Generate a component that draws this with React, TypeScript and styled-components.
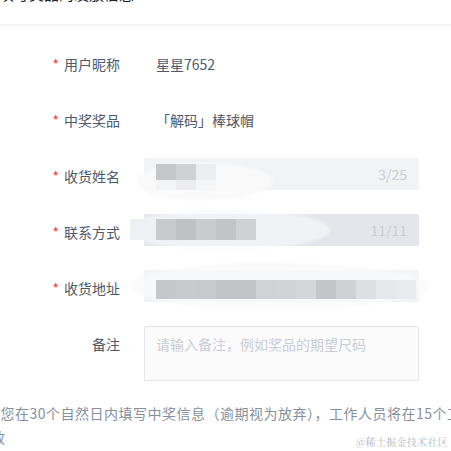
import styled, { createGlobalStyle } from 'styled-components';

const GlobalStyle = createGlobalStyle`
  html, body {
    margin: 0;
    padding: 0;
    background: #ffffff;
    overflow: hidden;
  }
  body {
    font-family: "Noto Sans CJK SC", "Noto Sans", sans-serif;
  }
`;

const Page = styled.div`
  position: relative;
  width: 451px;
  height: 451px;
  overflow: hidden;
`;

const Header = styled.div`
  margin-top: -18px;
  padding-bottom: 18px;
  border-bottom: 2px solid #f2f3f5;
`;

const HeaderTitle = styled.div`
  margin-left: -16px;
  font-size: 15px;
  line-height: 24px;
  color: #1d2129;
  white-space: nowrap;
`;

const Form = styled.div`
  display: flex;
  flex-direction: column;
  gap: 24px;
  padding-top: 20px;
`;

const Row = styled.div`
  display: flex;
  align-items: flex-start;
`;

const Label = styled.div`
  width: 120px;
  flex-shrink: 0;
  margin-right: 24px;
  box-sizing: border-box;
  height: 32px;
  padding-top: 4px;
  text-align: right;
  font-size: 14px;
  line-height: 28px;
  color: #4e5969;
  white-space: nowrap;
`;

const Star = styled.span`
  color: #f53f3f;
  margin-right: 5px;
`;

const Value = styled.div`
  box-sizing: border-box;
  height: 32px;
  padding: 4px 12px 0;
  font-size: 14px;
  line-height: 28px;
  color: #4e5969;
`;

const Field = styled.div<{ $tone?: string }>`
  position: relative;
  width: 275px;
  height: 32px;
  box-sizing: border-box;
  padding: 0 12px;
  display: flex;
  align-items: center;
  justify-content: flex-end;
  background: ${(p) => p.$tone || '#f2f3f5'};
  border-radius: 2px;
`;

const Counter = styled.span`
  position: relative;
  z-index: 2;
  font-size: 14px;
  color: #c9cdd4;
`;

const Smear = styled.div<{ $l: number; $t: number; $w: number; $h: number; $a?: number }>`
  position: absolute;
  left: ${(p) => p.$l}px;
  top: ${(p) => p.$t}px;
  width: ${(p) => p.$w}px;
  height: ${(p) => p.$h}px;
  background: rgba(249, 250, 251, ${(p) => p.$a ?? 0.9});
  border-radius: 40% 50% 50% 40% / 50%;
  filter: blur(1.5px);
  z-index: 0;
`;

const Mosaic = styled.div<{ $l: number; $t: number }>`
  position: absolute;
  left: ${(p) => p.$l}px;
  top: ${(p) => p.$t}px;
  display: flex;
  flex-direction: column;
  z-index: 1;
`;

const MosaicRow = styled.div<{ $h: number }>`
  display: flex;
  height: ${(p) => p.$h}px;
`;

const Cell = styled.div<{ $c: string; $w: number }>`
  width: ${(p) => p.$w}px;
  background: ${(p) => p.$c};
`;

const Remark = styled.textarea`
  width: 275px;
  height: 55px;
  box-sizing: border-box;
  padding: 6px 11px;
  border: 1px solid #e5e6eb;
  border-radius: 2px;
  background: #fbfbfc;
  font-family: "Noto Sans CJK SC", "Noto Sans", sans-serif;
  font-size: 14px;
  line-height: 22px;
  color: #4e5969;
  resize: none;
  outline: none;
  &::placeholder {
    color: #c9cdd4;
  }
`;

const Notice = styled.div`
  margin-top: 20px;
  margin-left: -9px;
  font-size: 14px;
  line-height: 24px;
  letter-spacing: 0.5px;
  color: #86909c;
  white-space: nowrap;
`;

const NoticeFirst = styled.div`
  margin-left: -5px;
`;

const Watermark = styled.div`
  position: absolute;
  right: 3px;
  bottom: 3px;
  font-family: "Noto Serif CJK SC", "Noto Sans CJK SC", serif;
  font-size: 10px;
  line-height: 12px;
  color: #b4b8bf;
  letter-spacing: 0.3px;
`;

type MosaicSpec = {
  l: number;
  t: number;
  rows: { h: number; cells: { c: string; w: number }[] }[];
};

const mk = (colors: string[], w = 20) => colors.map((c) => ({ c, w }));

const nameMosaic: MosaicSpec = {
  l: 12,
  t: 6,
  rows: [
    { h: 16, cells: mk(['#c6c7cb', '#cfd1d4', '#eceef0']) },
    { h: 10, cells: mk(['#f3f4f6', '#ececee', '#f4f5f7']) },
  ],
};

const phoneMosaic: MosaicSpec = {
  l: -14,
  t: 5,
  rows: [
    {
      h: 21,
      cells: [
        { c: '#eef0f3', w: 26 },
        ...mk(['#c8cacd', '#c0c1c5', '#c9cbce', '#c3c4c8', '#cfd1d4']),
      ],
    },
  ],
};

const addressMosaic: MosaicSpec = {
  l: 12,
  t: 10,
  rows: [
    {
      h: 19,
      cells: mk([
        '#c6c7cb',
        '#c9cacd',
        '#c8c9cc',
        '#c3c4c8',
        '#c3c4c8',
        '#d1d2d5',
        '#d2d3d6',
        '#d5d6d9',
        '#c4c5c9',
        '#d0d1d4',
        '#dedfe2',
        '#e6e7ea',
        '#e9eaed',
      ]),
    },
  ],
};

const Pixelated = ({ spec }: { spec: MosaicSpec }) => (
  <Mosaic $l={spec.l} $t={spec.t}>
    {spec.rows.map((row, i) => (
      <MosaicRow key={i} $h={row.h}>
        {row.cells.map((cell, j) => (
          <Cell key={j} $c={cell.c} $w={cell.w} />
        ))}
      </MosaicRow>
    ))}
  </Mosaic>
);

export default function App() {
  return (
    <Page>
      <GlobalStyle />
      <Header>
        <HeaderTitle>请填写奖品的发放信息</HeaderTitle>
      </Header>
      <Form>
        <Row>
          <Label>
            <Star>*</Star>用户昵称
          </Label>
          <Value>星星7652</Value>
        </Row>
        <Row>
          <Label>
            <Star>*</Star>中奖奖品
          </Label>
          <Value>「解码」棒球帽</Value>
        </Row>
        <Row>
          <Label>
            <Star>*</Star>收货姓名
          </Label>
          <Field>
            <Smear $l={-6} $t={5} $w={135} $h={37} />
            <Pixelated spec={nameMosaic} />
            <Counter>3/25</Counter>
          </Field>
        </Row>
        <Row>
          <Label>
            <Star>*</Star>联系方式
          </Label>
          <Field $tone="#e5e6eb">
            <Smear $l={-14} $t={-4} $w={200} $h={40} $a={0.6} />
            <Pixelated spec={phoneMosaic} />
            <Counter>11/11</Counter>
          </Field>
        </Row>
        <Row>
          <Label>
            <Star>*</Star>收货地址
          </Label>
          <Field>
            <Smear $l={-14} $t={-7} $w={300} $h={46} $a={0.7} />
            <Pixelated spec={addressMosaic} />
          </Field>
        </Row>
        <Row>
          <Label>备注</Label>
          <Remark placeholder="请输入备注，例如奖品的期望尺码" />
        </Row>
      </Form>
      <Notice>
        <NoticeFirst>请您在30个自然日内填写中奖信息（逾期视为放弃），工作人员将在15个工作日内完成发</NoticeFirst>
        <div>放</div>
      </Notice>
      <Watermark>@稀土掘金技术社区</Watermark>
    </Page>
  );
}
